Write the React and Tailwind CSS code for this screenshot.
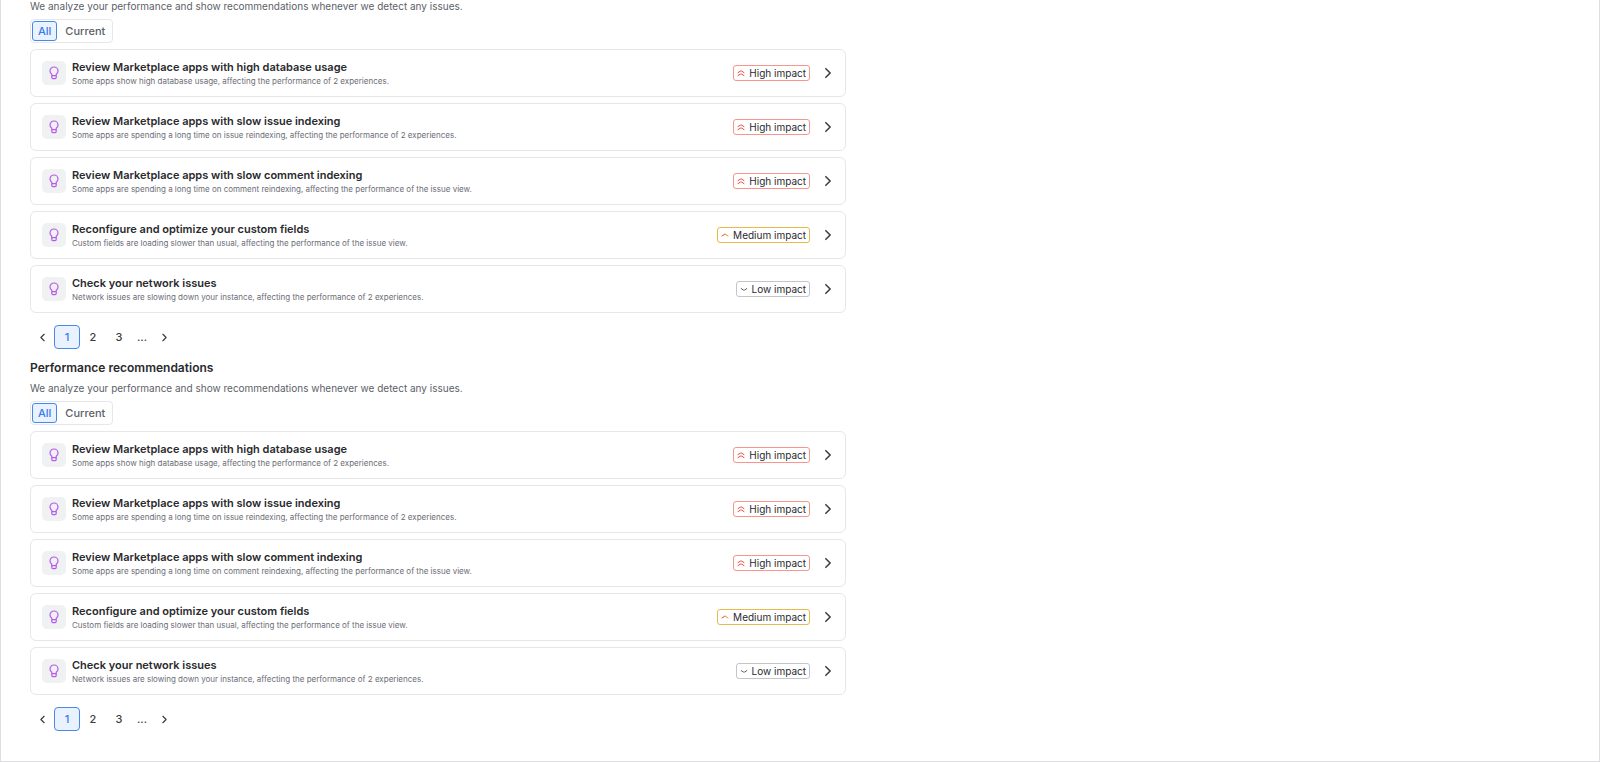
import { useState } from 'react';

const RECOMMENDATIONS = [
  {
    title: 'Review Marketplace apps with high database usage',
    detail: 'Some apps show high database usage, affecting the performance of 2 experiences.',
    impact: 'high',
  },
  {
    title: 'Review Marketplace apps with slow issue indexing',
    detail: 'Some apps are spending a long time on issue reindexing, affecting the performance of 2 experiences.',
    impact: 'high',
  },
  {
    title: 'Review Marketplace apps with slow comment indexing',
    detail: 'Some apps are spending a long time on comment reindexing, affecting the performance of the issue view.',
    impact: 'high',
  },
  {
    title: 'Reconfigure and optimize your custom fields',
    detail: 'Custom fields are loading slower than usual, affecting the performance of the issue view.',
    impact: 'medium',
  },
  {
    title: 'Check your network issues',
    detail: 'Network issues are slowing down your instance, affecting the performance of 2 experiences.',
    impact: 'low',
  },
];

const IMPACTS = {
  high: { label: 'High impact', border: 'border-[#f8958c]', Icon: HighIcon },
  medium: { label: 'Medium impact', border: 'border-[#e9b949]', Icon: MediumIcon },
  low: { label: 'Low impact', border: 'border-[#c3c5cd]', Icon: LowIcon },
};

function HighIcon() {
  return (
    <svg width="8" height="8" viewBox="0 0 8 8" fill="none" stroke="#e2483d" strokeLinecap="round" aria-hidden="true">
      <path d="M1 3.6 3.4 2.1Q4 1.7 4.6 2.1L7 3.6M1 6.6 3.4 5.1Q4 4.7 4.6 5.1L7 6.6" />
    </svg>
  );
}

// The medium chevron fades from red on the left to amber on the right.
function MediumIcon() {
  return (
    <svg width="8" height="8" viewBox="0 0 8 8" fill="none" strokeLinecap="round" aria-hidden="true">
      <path d="M1 5 3.4 3.4Q3.7 3.2 4 3.2" stroke="#e2483d" />
      <path d="M4 3.2Q4.3 3.2 4.6 3.4L7 5" stroke="#f18d13" />
    </svg>
  );
}

function LowIcon() {
  return (
    <svg width="8" height="8" viewBox="0 0 8 8" fill="none" stroke="#5c5f68" strokeLinecap="round" aria-hidden="true">
      <path d="M1.2 3.6 3.4 5Q4 5.3 4.6 5L6.8 3.6" />
    </svg>
  );
}

function BulbIcon() {
  return (
    <svg width="12" height="14" viewBox="0 0 12 14" fill="none" stroke="#b65ce8" strokeWidth="1.2" strokeLinejoin="round" aria-hidden="true">
      <path d="M3.8 9.7V8.3C2.6 7.4 2 6.4 2 5A4 4 0 0 1 10 5C10 6.4 9.4 7.4 8.2 8.3V9.7Z" />
      <path d="M3.8 9.7V11.6Q3.8 12.6 4.8 12.6H7.2Q8.2 12.6 8.2 11.6V9.7" />
    </svg>
  );
}

function ChevronIcon({ size, flip }) {
  return (
    <svg
      width={size}
      height={size}
      viewBox="0 0 10 10"
      fill="none"
      stroke="#3b3d42"
      strokeWidth="1.3"
      strokeLinecap="round"
      strokeLinejoin="round"
      aria-hidden="true"
    >
      <path d={flip ? 'M6.8 1.4 3.2 5 6.8 8.6' : 'M3.2 1.4 6.8 5 3.2 8.6'} />
    </svg>
  );
}

function ImpactBadge({ impact }) {
  const { label, border, Icon } = IMPACTS[impact];

  return (
    <span className={`flex h-4 items-center gap-1 rounded-[3px] border px-[3px] ${border}`}>
      <Icon />
      <span className="text-[10px] text-[#292a2e]">{label}</span>
    </span>
  );
}

function FilterToggle() {
  const [filter, setFilter] = useState('All');

  return (
    <div className="flex h-6 w-fit items-center gap-0.5 rounded-[4px] border border-[#e6e7e9] px-px">
      {['All', 'Current'].map((option) => (
        <button
          key={option}
          type="button"
          aria-pressed={filter === option}
          onClick={() => setFilter(option)}
          className={`h-5 rounded-[3px] border px-[5px] text-[11px] font-medium ${
            filter === option ? 'border-[#4688ec] bg-[#e9f2fe] text-[#357de8]' : 'border-transparent text-[#5c5f68]'
          }`}
        >
          {option}
        </button>
      ))}
    </div>
  );
}

function Pagination() {
  const [page, setPage] = useState(1);

  return (
    <nav aria-label="Pagination" className="flex h-6 items-center text-[11px] font-medium text-[#3b3d42]">
      <button type="button" aria-label="Previous page" className="flex h-6 w-6 items-center justify-center">
        <ChevronIcon size={9} flip />
      </button>
      {[1, 2, 3].map((number) => (
        <button
          key={number}
          type="button"
          aria-current={page === number ? 'page' : undefined}
          onClick={() => setPage(number)}
          className={`h-6 w-[26px] rounded-[4px] border ${
            page === number ? 'border-[#4688ec] bg-[#e9f2fe] text-[#357de8]' : 'border-transparent'
          }`}
        >
          {number}
        </button>
      ))}
      <span className="w-5 text-center">...</span>
      <button type="button" aria-label="Next page" className="flex h-6 w-6 items-center justify-center">
        <ChevronIcon size={9} />
      </button>
    </nav>
  );
}

function Recommendations({ heading }) {
  return (
    <section>
      {heading && <h2 className="mb-1.5 text-[12px] leading-4 font-semibold text-[#292a2e]">{heading}</h2>}
      <p className="mb-[7px] text-[10px] leading-3 text-[#5c5f68]">We analyze your performance and show recommendations whenever we detect any issues.</p>
      <FilterToggle />
      <ul className="mt-1.5 flex flex-col gap-1.5">
        {RECOMMENDATIONS.map(({ title, detail, impact }) => (
          <li key={title}>
            <button
              type="button"
              className="flex h-12 w-full items-center rounded-[6px] border border-[#e6e7e9] px-[11px] text-left"
            >
              <span className="flex h-6 w-6 items-center justify-center rounded-[5px] bg-[#f0f1f2]">
                <BulbIcon />
              </span>
              <span className="ml-1.5 flex flex-1 flex-col">
                <span className="text-[11px] leading-4 font-semibold text-[#292a2e]">{title}</span>
                <span className="text-[8px] leading-3 text-[#6b6e76]">{detail}</span>
              </span>
              <ImpactBadge impact={impact} />
              <span className="ml-3">
                <ChevronIcon size={12} />
              </span>
            </button>
          </li>
        ))}
      </ul>
      <div className="mt-3">
        <Pagination />
      </div>
    </section>
  );
}

function App() {
  return (
    <main className="min-h-screen overflow-hidden border-x border-b border-[#dddee1] bg-white font-['Inter',sans-serif]">
      <div className="ml-[29px] flex max-w-[816px] flex-col gap-[11px]">
        <Recommendations />
        <Recommendations heading="Performance recommendations" />
      </div>
    </main>
  );
}

export default App;
